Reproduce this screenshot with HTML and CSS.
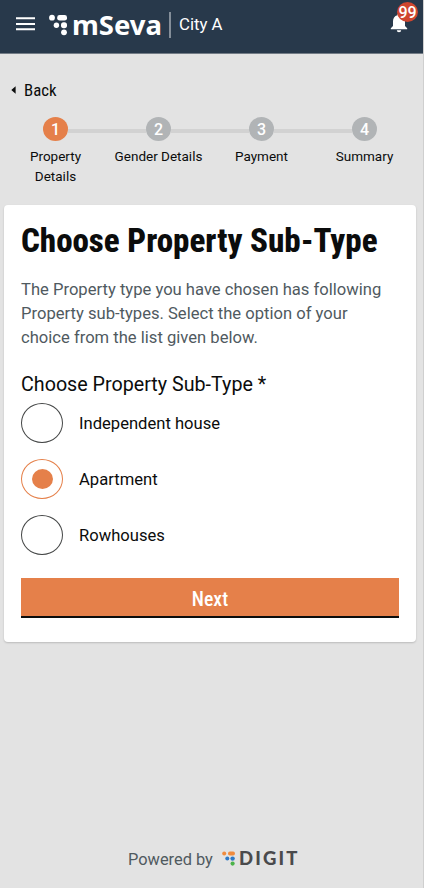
FILE: index.html
```html
<!DOCTYPE html>
<html lang="en">
<head>
<meta charset="utf-8">
<meta name="viewport" content="width=device-width">
<title>mSeva</title>
<link rel="stylesheet" href="styles.css">
</head>
<body>
<header class="topbar">
  <svg class="menu" width="20" height="14" viewBox="0 0 20 14"><path d="M0 1.200h19M0 6.900h19M0 12.200h19" stroke="#fff" stroke-width="2"/></svg>
  <svg class="mark" width="20" height="22" viewBox="0 0 20 22" fill="#fff"><circle cx="3" cy="3.700" r="2.900"/><rect x="8.200" y="1" width="9.800" height="5.600" rx="2.400"/><circle cx="7.400" cy="11.300" r="2.700"/><rect x="12" y="8.300" width="6" height="6" rx="2.700"/><circle cx="15" cy="18.300" r="2.900"/></svg>
  <span class="brand">mSeva</span>
  <span class="city">City A</span>
  <div class="alerts">
    <svg width="18" height="21" viewBox="0 0 18 21" fill="#fff"><path d="M9 .5c1 0 1.600.7 1.600 1.700 3 .8 4.400 3 4.400 6V13l2.200 2.200v1H.8v-1L3 13V8.200c0-3 1.400-5.200 4.400-6C7.400 1.200 8 .5 9 .5zM6.800 17.300h4.400a2.200 2 0 0 1-4.400 0z"/></svg>
    <span class="badge">99</span>
  </div>
</header>
<main>
  <a class="back"><svg width="5" height="8" viewBox="0 0 5 8"><path d="M4.600.3v7.400L.3 4z" fill="#0b0c0c"/></svg><span class="cond">Back</span></a>
  <ol class="steps">
    <li class="active"><b>1</b><span>Property Details</span></li>
    <li><b>2</b><span>Gender Details</span></li>
    <li><b>3</b><span>Payment</span></li>
    <li><b>4</b><span>Summary</span></li>
  </ol>
  <section class="card">
    <h1><span class="cond">Choose Property Sub-Type</span></h1>
    <p>The Property type you have chosen has following Property sub-types. Select the option of your choice from the list given below.</p>
    <h2>Choose Property Sub-Type *</h2>
    <div class="options">
      <label><i class="radio"></i><span>Independent house</span></label>
      <label class="selected"><i class="radio"></i><span>Apartment</span></label>
      <label><i class="radio"></i><span>Rowhouses</span></label>
    </div>
    <button type="button"><span class="cond">Next</span></button>
  </section>
</main>
<footer>
  <span class="powered">Powered by</span>
  <svg width="14" height="16" viewBox="0 0 14 16"><circle cx="2.200" cy="2.500" r="2" fill="#ef8b3e"/><rect x="6" y=".5" width="7" height="4" rx="1.900" fill="#ef8b3e"/><circle cx="5.300" cy="7.600" r="2" fill="#2d79c7"/><circle cx="10.600" cy="7.600" r="2.200" fill="#2d79c7"/><circle cx="10.600" cy="12.600" r="2.100" fill="#4cb34a"/></svg>
  <span class="digit">DIGIT</span>
</footer>
</body>
</html>
```
FILE: styles.css
```css
* { box-sizing: border-box; }
body { margin: 0; height: 888px; display: flex; flex-direction: column; background: #e3e3e3; border-right: 1px solid #cfcfcf; color: #0b0c0c; font-family: Roboto, "Liberation Sans", sans-serif; overflow: hidden; }
.topbar { width: 424px; height: 54px; flex: none; background: #28394b; border-bottom: 1px solid #737c86; display: flex; align-items: flex-start; color: #fff; }
.menu { margin: 17px 0 0 16px; }
.mark { margin: 14px 0 0 13px; }
.brand { width: 89px; margin-left: 3px; font: 700 27.500px/32px "Noto Sans", sans-serif; margin-top: 9px; }
.city { border-left: 2px solid #848e99; height: 26px; margin-top: 12px; margin-left: 8px; padding-left: 8px; font-size: 16.800px; line-height: 25px; white-space: nowrap; }
.alerts { position: relative; margin: 13px 16px 0 auto; height: 21px; }
.badge { position: absolute; left: 7px; top: -11px; width: 21px; height: 20px; border-radius: 50%; background: #cf4630; font-weight: 500; font-size: 16px; line-height: 22px; text-align: center; }
.cond { display: inline-block; font-family: "Roboto Condensed", Roboto, sans-serif; font-stretch: 75%; white-space: nowrap; }
.back { display: flex; align-items: center; height: 20px; margin: 26px 0 0 11px; gap: 8px; font-size: 16.800px; }
.steps { list-style: none; display: flex; margin: 17px 0 0 4px; padding: 0; width: 412px; height: 88px; }
.steps li { flex: 1; position: relative; display: flex; flex-direction: column; align-items: center; font-size: 13.500px; line-height: 20px; text-align: center; }
.steps li + li::before { content: ""; position: absolute; width: 78px; height: 4px; background: #d2d2d2; left: -39px; top: 12px; }
.steps b { width: 25px; height: 24px; border-radius: 50%; background: #b1b4b6; color: #fff; font-weight: 500; font-size: 16px; line-height: 25px; margin-bottom: 5px; }
.steps .active b { background: #e5804a; }
.steps .active span { width: 60px; }
.card { margin-left: 4px; width: 412px; height: 437px; padding: 17px 17px 0; background: #fff; border-radius: 4px; box-shadow: 0 1px 2px rgba(0,0,0,.18); }
h1 { font-size: 33px; line-height: 38px; font-weight: 800; margin: 0 0 18px; }
p { margin: 0; font-size: 16.600px; line-height: 24px; color: #505a5f; }
h2 { margin: 22px 0 6px; font-size: 19.700px; line-height: 25px; font-weight: 400; white-space: nowrap; }
.options { display: flex; flex-direction: column; gap: 16px; }
label { display: flex; align-items: center; gap: 16px; height: 40px; font-size: 16.600px; }
.radio { width: 42px; height: 40px; border: 1px solid #464848; border-radius: 50%; display: flex; align-items: center; justify-content: center; }
.selected .radio { border-color: #e5804a; }
.selected .radio::after { content: ""; width: 21px; height: 20px; border-radius: 50%; background: #e5804a; }
button { display: block; width: 100%; height: 40px; margin: 23px 0 0; padding: 4px 0 0; border: 0; border-bottom: 2px solid #0b0c0c; background: #e5804a; color: #fff; font: 500 19.750px/34px Roboto, sans-serif; }
button .cond { position: relative; top: 1px; }
footer { display: flex; align-items: center; margin: auto 0 19px 128px; height: 20px; }
.powered { font-size: 16.400px; color: #505a5f; margin-right: 9px; white-space: nowrap; }
.digit { font: 900 18.500px/20px Lato, sans-serif; color: #4a4a4c; margin: -2px 0 0 3px; letter-spacing: 2.200px; }
```
